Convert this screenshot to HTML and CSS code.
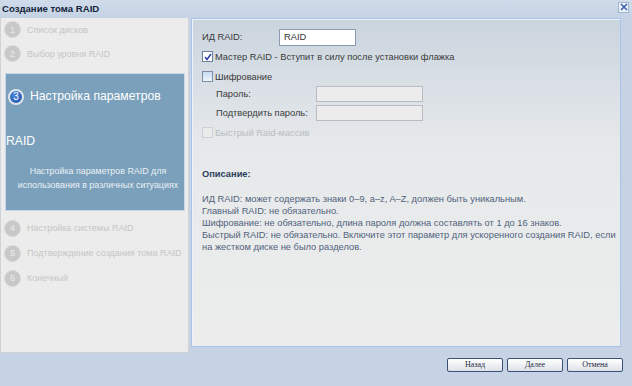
FILE: index.html
```html
<!DOCTYPE html>
<html lang="ru">
<head>
    <link rel="stylesheet" href="styles.css">
    <meta charset="UTF-8">
    <title>Создание тома RAID</title>
</head>
<body>

<div class="window">
    <div class="titlebar">
        <span class="title">Создание тома RAID</span>
        <span class="close">
            <svg width="8" height="8" viewBox="0 0 8 8"><path d="M1 1L7 7M7 1L1 7" stroke="#3b5fb0" stroke-width="1.6"/></svg>
        </span>
    </div>

    <div class="main">
        <div class="sidebar">
            <div class="step top"><span class="num">1</span>Список дисков</div>
            <div class="step top"><span class="num">2</span>Выбор уровня RAID</div>

            <div class="step-active">
                <div class="active-title"><span class="num-active">3</span>Настройка параметров<br>RAID</div>
                <div class="active-desc">Настройка параметров RAID для<br>использования в различных ситуациях</div>
            </div>

            <div class="step step4"><span class="num">4</span>Настройка системы RAID</div>
            <div class="step"><span class="num">5</span>Подтверждение создания тома RAID</div>
            <div class="step"><span class="num">6</span>Конечный</div>
        </div>

        <div class="content">
            <div class="row-id">
                <span class="label-id">ИД RAID:</span>
                <span class="input-id">RAID</span>
            </div>

            <div class="check-row master">
                <span class="box checked">
                    <svg width="8" height="8" viewBox="0 0 8 8"><path d="M1 4L3 6.5L7 1" fill="none" stroke="#2438a8" stroke-width="1.4"/></svg>
                </span>
                Мастер RAID - Вступит в силу после установки флажка
            </div>

            <div class="check-row crypt">
                <span class="box"></span>
                Шифрование
            </div>

            <div class="pass-row first">
                <span class="label-pass">Пароль:</span>
                <span class="input-pass"></span>
            </div>
            <div class="pass-row">
                <span class="label-pass">Подтвердить пароль:</span>
                <span class="input-pass"></span>
            </div>

            <div class="check-row fast">
                <span class="box disabled"></span>
                Быстрый Raid-массив
            </div>

            <div class="desc-title">Описание:</div>
            <div class="desc">
                ИД RAID: может содержать знаки 0–9, a–z, A–Z, должен быть уникальным.<br>
                Главный RAID: не обязательно.<br>
                Шифрование: не обязательно, длина пароля должна составлять от 1 до 16 знаков.<br>
                Быстрый RAID: не обязательно. Включите этот параметр для ускоренного создания RAID, если<br>
                на жестком диске не было разделов.
            </div>
        </div>
    </div>

    <div class="footer">
        <span class="button">Назад</span>
        <span class="button">Далее</span>
        <span class="button">Отмена</span>
    </div>
</div>

</body>
</html>
```

FILE: styles.css
```css
body {
    margin: 0;
    font-family: "Liberation Sans", Arial, sans-serif;
    font-size: 9.3px;
    background-color: #c5d3e4;
}
.window {
    width: 632px;
    height: 386px;
    display: flex;
    flex-direction: column;
}
.titlebar {
    height: 18px;
    display: flex;
    align-items: center;
    justify-content: space-between;
    padding: 0 3px 0 2px;
    background: linear-gradient(#d0dcea, #c4d2e3);
}
.title {
    font-weight: bold;
    font-size: 9.6px;
    color: #16243c;
}
.close {
    width: 9px;
    height: 9px;
    border: 1px solid #9fb3d3;
    background-color: #eef2f9;
    display: flex;
    align-items: center;
    justify-content: center;
    margin-top: -3px;
}
.main {
    height: 340px;
    display: flex;
}

/* left column with the steps */
.sidebar {
    width: 187px;
    border: 1px solid #d0d3d6;
    border-top: none;
    background-color: #ebeceb;
}
.step {
    height: 25px;
    display: flex;
    align-items: center;
    padding-left: 3px;
    color: #c6c6c6;
    font-size: 9px;
    white-space: nowrap;
}
.step.top {
    height: 24px;
}
.step4 {
    margin-top: 5px;
}
.num {
    width: 15px;
    height: 15px;
    border-radius: 50%;
    border: 1px solid #d9d9d9;
    background-color: #c8c8c8;
    color: #ececec;
    font-size: 9px;
    display: flex;
    align-items: center;
    justify-content: center;
    margin-right: 6px;
}
.step-active {
    margin: 7px 3px 0 4px;
    height: 136px;
    border: 1px solid #c7d7e9;
    background-color: #7aa0bb;
    color: #fff;
}
.active-title {
    font-size: 12.2px;
    line-height: 45px;
}
.num-active {
    display: inline-flex;
    align-items: center;
    justify-content: center;
    width: 12px;
    height: 12px;
    border-radius: 50%;
    border: 2px solid #dfe5eb;
    background: radial-gradient(circle at 40% 35%, #4a86d8, #1f4fa6);
    font-size: 10px;
    line-height: 12px;
    margin: 0 6px 0 2px;
    vertical-align: 0;
}
.active-desc {
    font-size: 8.9px;
    line-height: 14px;
    text-align: center;
    color: #eaf0f5;
    padding-left: 6px;
}

/* right form area */
.content {
    margin-left: 2px;
    width: 418px;
    height: 317px;
    padding: 10px 0 0 10px;
    border: 1px solid #a9c2e8;
    box-shadow: inset 1px 1px 0 #eef3fb;
    background: linear-gradient(#cad4de 0, #e6e9eb 125px, #ecedec 100%);
    color: #3a3a3a;
}
.row-id {
    height: 17px;
    display: flex;
    align-items: center;
}
.label-id {
    width: 77px;
}
.input-id {
    width: 71px;
    height: 15px;
    line-height: 15px;
    padding-left: 4px;
    border: 1px solid #8d9bb1;
    background-color: #fff;
    color: #333;
}
.check-row {
    height: 12px;
    display: flex;
    align-items: center;
}
.master {
    margin-top: 5px;
}
.crypt {
    margin-top: 8px;
}
.fast {
    margin-top: 5px;
    color: #b9bcc0;
}
.box {
    width: 9px;
    height: 9px;
    border: 1px solid #7d8ea8;
    background: linear-gradient(#c9dcf0, #eef4fb);
    margin-right: 2px;
    display: flex;
    align-items: center;
    justify-content: center;
}
.box.checked {
    background: #fff;
    border-color: #6e7f9c;
}
.box.disabled {
    border-color: #cfd1d4;
    background: #e9eaea;
}
.pass-row {
    height: 17px;
    display: flex;
    align-items: center;
    padding-left: 14px;
    margin-top: 2px;
}
.pass-row.first {
    margin-top: 3px;
}
.label-pass {
    width: 100px;
}
.input-pass {
    width: 105px;
    height: 14px;
    border: 1px solid #b9bdc3;
    background-color: #ebeceb;
}
.desc-title {
    margin-top: 29px;
    font-weight: bold;
    line-height: 12px;
    color: #2b3e5a;
}
.desc {
    margin-top: 13px;
    line-height: 12px;
    color: #52627c;
    white-space: nowrap;
}

.footer {
    height: 28px;
    display: flex;
    justify-content: flex-end;
    align-items: flex-start;
    padding-top: 5px;
    padding-right: 9px;
    gap: 4px;
}
.button {
    width: 54px;
    height: 12px;
    border: 1px solid #3d5078;
    border-radius: 2px;
    background: linear-gradient(#ffffff, #dde1e8);
    font-family: "Liberation Serif", serif;
    font-size: 8px;
    line-height: 12px;
    text-align: center;
    color: #1e2a44;
}
```
